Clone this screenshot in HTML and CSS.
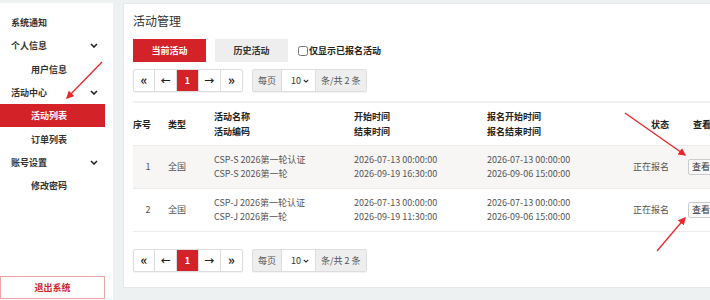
FILE: index.html
```html
<!DOCTYPE html>
<html lang="zh-CN">
  <head>
    <meta charset="UTF-8" />
    <meta name="viewport" content="width=device-width, initial-scale=1.0" />
    <title>活动管理</title>
    <link rel="stylesheet" href="styles.css">
  </head>
  <body>
    <div class="layout">
      <!-- 左侧菜单 -->
      <aside class="sidebar">
        <ul class="menu">
          <li class="menu-item">系统通知</li>
          <li class="menu-item">个人信息
            <svg class="chevron" viewBox="0 0 8 5"><path d="M1 1 L4 4 L7 1" /></svg>
          </li>
          <li class="menu-item sub">用户信息</li>
          <li class="menu-item">活动中心
            <svg class="chevron" viewBox="0 0 8 5"><path d="M1 1 L4 4 L7 1" /></svg>
          </li>
          <li class="menu-item sub active">活动列表</li>
          <li class="menu-item sub">订单列表</li>
          <li class="menu-item">账号设置
            <svg class="chevron" viewBox="0 0 8 5"><path d="M1 1 L4 4 L7 1" /></svg>
          </li>
          <li class="menu-item sub">修改密码</li>
        </ul>
        <button class="logout">退出系统</button>
      </aside>

      <!-- 主内容 -->
      <main class="content">
        <div class="card">
          <h1 class="card-title">活动管理</h1>

          <div class="tabs">
            <button class="tab tab-active">当前活动</button>
            <button class="tab">历史活动</button>
            <label class="only-mine"><input type="checkbox" />仅显示已报名活动</label>
          </div>

          <div class="pager">
            <div class="pg-group">
              <span class="pg-btn pg-jump">«</span>
              <span class="pg-btn">←</span>
              <span class="pg-btn pg-current">1</span>
              <span class="pg-btn">→</span>
              <span class="pg-btn pg-jump">»</span>
            </div>
            <div class="pg-size">
              <span class="pg-label">每页</span>
              <span class="pg-select">10
                <svg class="chevron small" viewBox="0 0 8 5"><path d="M1 1 L4 4 L7 1" /></svg>
              </span>
              <span class="pg-label">条/共 2 条</span>
            </div>
          </div>

          <table class="list">
            <thead>
              <tr>
                <th class="c-no">序号</th>
                <th class="c-type">类型</th>
                <th class="c-name">活动名称<br />活动编码</th>
                <th class="c-time">开始时间<br />结束时间</th>
                <th class="c-reg">报名开始时间<br />报名结束时间</th>
                <th class="c-status">状态</th>
                <th class="c-view">查看</th>
              </tr>
            </thead>
            <tbody>
              <tr class="odd">
                <td class="c-no">1</td>
                <td>全国</td>
                <td>CSP-S 2026第一轮认证<br />CSP-S 2026第一轮</td>
                <td>2026-07-13 00:00:00<br />2026-09-19 16:30:00</td>
                <td>2026-07-13 00:00:00<br />2026-09-06 15:00:00</td>
                <td class="c-status">正在报名</td>
                <td class="c-view"><button class="view-btn">查看</button></td>
              </tr>
              <tr>
                <td class="c-no">2</td>
                <td>全国</td>
                <td>CSP-J 2026第一轮认证<br />CSP-J 2026第一轮</td>
                <td>2026-07-13 00:00:00<br />2026-09-19 11:30:00</td>
                <td>2026-07-13 00:00:00<br />2026-09-06 15:00:00</td>
                <td class="c-status">正在报名</td>
                <td class="c-view"><button class="view-btn">查看</button></td>
              </tr>
            </tbody>
          </table>

          <div class="pager pager-bottom">
            <div class="pg-group">
              <span class="pg-btn pg-jump">«</span>
              <span class="pg-btn">←</span>
              <span class="pg-btn pg-current">1</span>
              <span class="pg-btn">→</span>
              <span class="pg-btn pg-jump">»</span>
            </div>
            <div class="pg-size">
              <span class="pg-label">每页</span>
              <span class="pg-select">10
                <svg class="chevron small" viewBox="0 0 8 5"><path d="M1 1 L4 4 L7 1" /></svg>
              </span>
              <span class="pg-label">条/共 2 条</span>
            </div>
          </div>
        </div>
      </main>
    </div>

    <!-- 标注箭头 -->
    <svg class="marks" width="710" height="300" viewBox="0 0 710 300">
      <defs>
        <marker id="head" markerWidth="6" markerHeight="6" refX="5" refY="3" orient="auto">
          <path d="M0 0 L6 3 L0 6 z" fill="#e8262b" />
        </marker>
      </defs>
      <line x1="102" y1="62" x2="67" y2="98" marker-end="url(#head)" />
      <line x1="625" y1="113" x2="685" y2="155" marker-end="url(#head)" />
      <line x1="657" y1="251" x2="685" y2="218" marker-end="url(#head)" />
    </svg>
  </body>
</html>
```

FILE: styles.css
```css
html,
body {
  margin: 0;
  height: 100%;
  overflow: hidden;
}
body {
  background-color: #eef1f1;
  color: #333333;
  font-family: "Noto Sans CJK SC", "Noto Sans", sans-serif;
  font-size: 9px;
}
.layout {
  display: flex;
  gap: 10px;
  padding-top: 3px;
  height: 297px;
}

/* 左侧菜单 */
.sidebar {
  flex: none;
  width: 105px;
  padding: 8px 8px 1px 0;
  background-color: #ffffff;
  display: flex;
  flex-direction: column;
  justify-content: space-between;
}
.menu {
  list-style: none;
  margin: 0;
  padding: 0;
}
.menu-item {
  height: 23.3px;
  display: flex;
  align-items: center;
  justify-content: space-between;
  padding: 0 7px 0 11px;
  font-weight: bold;
  color: #333333;
}
.menu-item.sub {
  padding-left: 31px;
}
.menu-item.active {
  background-color: #d42229;
  color: #ffffff;
}
.chevron {
  width: 8px;
  height: 5px;
  fill: none;
  stroke: #222222;
  stroke-width: 1.6;
}
.chevron.small {
  width: 6px;
  height: 4px;
  stroke-width: 1.4;
}
.logout {
  width: 105px;
  height: 23px;
  border: 1px solid #f0a3a5;
  background-color: #ffffff;
  color: #d42229;
  font-family: inherit;
  font-size: 9px;
  font-weight: bold;
  padding: 0;
}

/* 主内容卡片 */
.content {
  flex: none;
}
.card {
  width: 596px;
  height: 265px;
  padding: 8px 10px 10px 9px;
  background-color: #ffffff;
  border: 1px solid #e4e8e8;
}
.card-title {
  margin: 0;
  font-size: 12px;
  font-weight: normal;
  line-height: 18px;
  color: #333333;
}
.tabs {
  display: flex;
  align-items: center;
  gap: 9px;
  margin-top: 9px;
}
.tab {
  width: 73px;
  height: 23px;
  border: none;
  padding: 0;
  background-color: #eeeeee;
  color: #333333;
  font-family: inherit;
  font-size: 9px;
  font-weight: bold;
}
.tab-active {
  background-color: #d42229;
  color: #ffffff;
}
.only-mine {
  display: flex;
  align-items: center;
  margin-left: 1px;
  font-weight: bold;
  color: #222222;
}
.only-mine input {
  width: 10px;
  height: 10px;
  margin: 0 1px 0 0;
}

/* 分页 */
.pager {
  display: flex;
  gap: 9px;
  margin-top: 7px;
  height: 23px;
}
.pager-bottom {
  margin-top: 17px;
}
.pg-group,
.pg-size {
  display: flex;
  border: 1px solid #dddddd;
  border-radius: 2px;
  box-shadow: 0 1px 1px rgba(0, 0, 0, 0.05);
}
.pg-btn {
  width: 21px;
  display: flex;
  align-items: center;
  justify-content: center;
  border-right: 1px solid #dddddd;
  font-size: 10px;
  font-weight: bold;
  color: #222222;
}
.pg-btn:last-child {
  border-right: none;
}
.pg-jump {
  font-size: 13px;
  padding-bottom: 2px;
  box-sizing: border-box;
}
.pg-current {
  background-color: #d42229;
  color: #ffffff;
  font-size: 9px;
}
.pg-label {
  display: flex;
  align-items: center;
  padding: 0 5px;
  background-color: #eeeeee;
  color: #555555;
}
.pg-select {
  width: 35px;
  display: flex;
  align-items: center;
  justify-content: space-between;
  padding: 0 6px 0 9px;
  box-sizing: border-box;
  border-left: 1px solid #dddddd;
  border-right: 1px solid #dddddd;
  color: #333333;
}

/* 列表 */
.list {
  margin-top: 9px;
  width: 596px;
  border-collapse: collapse;
  border-top: 2px solid #f0f0f0;
  border-bottom: 1px solid #ececec;
}
.list th {
  height: 42px;
  padding: 0;
  text-align: left;
  font-weight: bold;
  line-height: 15px;
  color: #222222;
}
.list td {
  height: 42px;
  padding: 0;
  line-height: 14px;
  color: #555555;
}
.list tbody tr {
  border-top: 1px solid #ececec;
}
.list tr.odd {
  background-color: #f7f6f5;
}
.list th.c-no {
  width: 35px;
}
.list td.c-no {
  width: 30px;
  padding-right: 5px;
  text-align: center;
}
.c-type {
  width: 46px;
}
.c-name {
  width: 140px;
}
.c-time {
  width: 133px;
}
.c-reg {
  width: 120px;
}
.list .c-status {
  width: 62px;
  text-align: right;
}
.list th.c-view {
  padding-left: 24px;
}
.list td.c-view {
  padding-left: 19px;
}
.view-btn {
  height: 16px;
  padding: 0 3px;
  border: 1px solid #cccccc;
  border-radius: 2px;
  background-color: #f9f9f9;
  color: #333333;
  font-family: inherit;
  font-size: 9px;
  line-height: 14px;
}

/* 标注箭头 */
.marks {
  position: absolute;
  left: 0;
  top: 0;
  pointer-events: none;
}
.marks line {
  stroke: #e8262b;
  stroke-width: 1.3;
}
```
